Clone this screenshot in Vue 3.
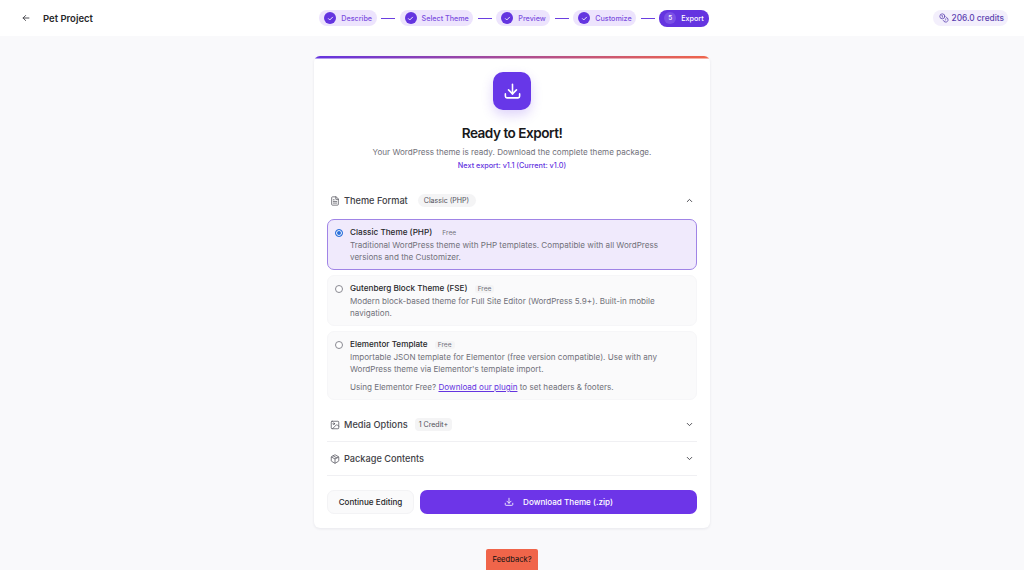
<template>
  <div class="page">
    <header class="topbar">
      <div class="topbar-left">
        <button class="back" aria-label="Back">
          <svg viewBox="0 0 24 24" width="10" height="10" fill="none" stroke="currentColor" stroke-width="2.2" stroke-linecap="round" stroke-linejoin="round">
            <path d="M19 12H5M11 6l-6 6 6 6" />
          </svg>
        </button>
        <span class="project">Pet Project</span>
      </div>

      <nav class="steps">
        <template v-for="(step, i) in steps" :key="step">
          <span v-if="i > 0" class="step-line"></span>
          <span class="step" :class="{ current: i === steps.length - 1 }">
            <span class="step-dot">
              <svg v-if="i < steps.length - 1" viewBox="0 0 24 24" width="7" height="7" fill="none" stroke="currentColor" stroke-width="3" stroke-linecap="round" stroke-linejoin="round">
                <path d="M5 12.5l4.5 4.5L19 7.5" />
              </svg>
              <template v-else>{{ i + 1 }}</template>
            </span>
            {{ step }}
          </span>
        </template>
      </nav>

      <div class="topbar-right">
        <span class="credits">
          <svg viewBox="0 0 24 24" width="10" height="10" fill="none" stroke="currentColor" stroke-width="1.9" stroke-linecap="round" stroke-linejoin="round">
            <circle cx="8" cy="8" r="6" />
            <path d="M18.1 10.4A6 6 0 1 1 10.3 18.1" />
            <path d="M7 6h1v4" />
            <path d="M16.7 13.9l.7.7-2.8 2.8" />
          </svg>
          206.0 credits
        </span>
      </div>
    </header>

    <main class="content">
      <section class="card">
        <div class="hero">
          <div class="hero-icon">
            <svg viewBox="0 0 24 24" width="19" height="19" fill="none" stroke="currentColor" stroke-width="2" stroke-linecap="round" stroke-linejoin="round">
              <path d="M21 15v3a2 2 0 0 1-2 2H5a2 2 0 0 1-2-2v-3" />
              <path d="M7 10l5 5 5-5" />
              <path d="M12 15V3" />
            </svg>
          </div>
          <h1>Ready to Export!</h1>
          <p class="lead">Your WordPress theme is ready. Download the complete theme package.</p>
          <p class="version">Next export: v1.1 (Current: v1.0)</p>
        </div>

        <div class="section open">
          <div class="section-head">
            <svg class="section-icon" viewBox="0 0 24 24" fill="none" stroke="currentColor" stroke-width="1.8" stroke-linecap="round" stroke-linejoin="round">
              <path d="M14 2H6a2 2 0 0 0-2 2v16a2 2 0 0 0 2 2h12a2 2 0 0 0 2-2V8z" />
              <path d="M14 2v6h6M16 13H8M16 17H8M10 9H8" />
            </svg>
            <span class="section-title">Theme Format</span>
            <span class="chip">Classic (PHP)</span>
            <svg class="chevron" viewBox="0 0 24 24" fill="none" stroke="currentColor" stroke-width="2.4" stroke-linecap="round" stroke-linejoin="round">
              <path d="M6 15l6-6 6 6" />
            </svg>
          </div>

          <div class="options">
            <div v-for="opt in options" :key="opt.name" class="option" :class="{ selected: opt.selected }">
              <span class="radio"></span>
              <div class="option-body">
                <div class="option-name">{{ opt.name }} <span class="free">Free</span></div>
                <p>{{ opt.text }}</p>
                <p v-if="opt.plugin" class="plugin">Using Elementor Free? <a href="#">Download our plugin</a> to set headers &amp; footers.</p>
              </div>
            </div>
          </div>
        </div>

        <div class="section">
          <div class="section-head">
            <svg class="section-icon" viewBox="0 0 24 24" fill="none" stroke="currentColor" stroke-width="1.8" stroke-linecap="round" stroke-linejoin="round">
              <rect x="3" y="3" width="18" height="18" rx="2" />
              <circle cx="9" cy="9" r="2" />
              <path d="M21 15l-3.1-3.1a2 2 0 0 0-2.8 0L6 21" />
            </svg>
            <span class="section-title">Media Options</span>
            <span class="chip small">1 Credit+</span>
            <svg class="chevron" viewBox="0 0 24 24" fill="none" stroke="currentColor" stroke-width="2.4" stroke-linecap="round" stroke-linejoin="round">
              <path d="M6 9l6 6 6-6" />
            </svg>
          </div>
        </div>

        <div class="section">
          <div class="section-head">
            <svg class="section-icon" viewBox="0 0 24 24" fill="none" stroke="currentColor" stroke-width="1.8" stroke-linecap="round" stroke-linejoin="round">
              <path d="M21 8a2 2 0 0 0-1-1.73l-7-4a2 2 0 0 0-2 0l-7 4A2 2 0 0 0 3 8v8a2 2 0 0 0 1 1.73l7 4a2 2 0 0 0 2 0l7-4A2 2 0 0 0 21 16z" />
              <path d="M3.3 7L12 12l8.7-5M12 22V12M7.5 4.3l9 5.2" />
            </svg>
            <span class="section-title">Package Contents</span>
            <svg class="chevron" viewBox="0 0 24 24" fill="none" stroke="currentColor" stroke-width="2.4" stroke-linecap="round" stroke-linejoin="round">
              <path d="M6 9l6 6 6-6" />
            </svg>
          </div>
        </div>

        <div class="actions">
          <button class="btn-secondary">Continue Editing</button>
          <button class="btn-primary">
            <svg viewBox="0 0 24 24" width="10" height="10" fill="none" stroke="currentColor" stroke-width="2" stroke-linecap="round" stroke-linejoin="round">
              <path d="M21 15v3a2 2 0 0 1-2 2H5a2 2 0 0 1-2-2v-3" />
              <path d="M7 10l5 5 5-5" />
              <path d="M12 15V3" />
            </svg>
            Download Theme (.zip)
          </button>
        </div>
      </section>
    </main>

    <button class="feedback">Feedback?</button>
  </div>
</template>

<script setup>
const steps = ['Describe', 'Select Theme', 'Preview', 'Customize', 'Export']

const options = [
  {
    name: 'Classic Theme (PHP)',
    text: 'Traditional WordPress theme with PHP templates. Compatible with all WordPress versions and the Customizer.',
    selected: true
  },
  {
    name: 'Gutenberg Block Theme (FSE)',
    text: 'Modern block-based theme for Full Site Editor (WordPress 5.9+). Built-in mobile navigation.'
  },
  {
    name: 'Elementor Template',
    text: "Importable JSON template for Elementor (free version compatible). Use with any WordPress theme via Elementor's template import.",
    plugin: true
  }
]
</script>

<style scoped>
.page {
  position: relative;
  height: 570px;
  overflow: hidden;
  background: #f9f9fb;
  font-family: Inter, "Liberation Sans", sans-serif;
  color: #27272a;
}

.topbar {
  display: grid;
  grid-template-columns: 1fr auto 1fr;
  align-items: center;
  height: 36px;
  padding: 0 16px 0 20px;
  background: #fff;
}

.topbar-left {
  display: flex;
  align-items: center;
  gap: 12px;
}

.back {
  display: flex;
  margin-left: 1px;
  padding: 0;
  border: none;
  background: none;
  color: #3f3f46;
}

.project {
  font-size: 9.5px;
  font-weight: 600;
  color: #27272a;
}

.steps {
  display: flex;
  align-items: center;
}

.step {
  display: flex;
  align-items: center;
  gap: 5px;
  height: 16px;
  padding: 0 4.5px 0 5px;
  border-radius: 8px;
  background: #ede4fd;
  color: #7c4fe0;
  font-size: 7.2px;
  font-weight: 500;
  white-space: nowrap;
}

.step-dot {
  display: flex;
  align-items: center;
  justify-content: center;
  width: 12px;
  height: 12px;
  border-radius: 50%;
  background: #6434e0;
  color: #fff;
  font-size: 6.4px;
}

.step.current {
  height: 17px;
  padding: 0 5px;
  background: #6434e0;
  color: #fff;
}

.step.current .step-dot {
  background: #7a50e6;
}

.step-line {
  width: 14px;
  height: 1px;
  margin: 0 4.5px;
  background: #6a3fe0;
}

.topbar-right {
  display: flex;
  justify-content: flex-end;
}

.credits {
  display: flex;
  align-items: center;
  gap: 3px;
  height: 16px;
  padding: 0 4px 0 6px;
  border-radius: 8px;
  background: #f3effc;
  color: #5b3fb0;
  font-size: 8.3px;
  font-weight: 500;
}

.content {
  display: flex;
  justify-content: center;
  padding-top: 20px;
}

.card {
  width: 396px;
  height: 472px;
  box-sizing: border-box;
  padding: 0 13px;
  border-radius: 6px;
  background:
    linear-gradient(90deg, #6434e0, #f0654a) top / 100% 2.5px no-repeat,
    #fff;
  box-shadow: 0 1px 3px rgba(24, 24, 60, 0.08);
}

.hero {
  display: flex;
  flex-direction: column;
  align-items: center;
  padding-top: 16px;
  text-align: center;
}

.hero-icon {
  display: flex;
  align-items: center;
  justify-content: center;
  width: 38px;
  height: 38px;
  border-radius: 10px;
  background: #6737e8;
  color: #fff;
  box-shadow: 0 5px 12px rgba(103, 55, 232, 0.22);
}

h1 {
  margin: 15px 0 0;
  font-size: 13.6px;
  line-height: 17px;
  font-weight: 600;
  letter-spacing: -0.5px;
  color: #18181b;
}

.lead {
  margin: 4px 0 0;
  font-size: 8.1px;
  line-height: 12px;
  color: #71717a;
}

.version {
  margin: 3px 0 0;
  font-size: 7.28px;
  line-height: 10px;
  font-weight: 500;
  color: #6434e0;
}

.section {
  border-bottom: 1px solid #f0f0f3;
}

.section.open {
  border-bottom: none;
  margin-top: 13px;
}

.section-head {
  display: flex;
  align-items: center;
  height: 33px;
  padding: 0 3px;
}

.section-icon {
  width: 10px;
  height: 10px;
  margin-right: 4px;
  color: #52525b;
}

.section-title {
  font-size: 9.2px;
  font-weight: 500;
  color: #3f3f46;
}

.chip {
  margin-left: 10px;
  padding: 0 7px 0 6px;
  height: 13px;
  line-height: 13px;
  border-radius: 7px;
  background: #f4f4f5;
  color: #52525b;
  font-size: 7.07px;
}

.chip.small {
  margin-left: 7px;
  padding: 0 4px;
  border-radius: 4px;
}

.chevron {
  width: 9px;
  height: 9px;
  margin-left: auto;
  color: #3f3f46;
}

.options {
  display: flex;
  flex-direction: column;
  gap: 5px;
  margin-top: 2px;
  padding-bottom: 8px;
}

.option {
  display: flex;
  gap: 7px;
  padding: 7px 8px 6px 7px;
  border: 1px solid #f6f6f8;
  border-radius: 7px;
  background: #fafafb;
}

.option.selected {
  border-color: #a084e6;
  background: #f0eafc;
}

.radio {
  flex: none;
  width: 8px;
  height: 8px;
  margin-top: 2px;
  box-sizing: border-box;
  border: 1px solid #8a8a92;
  border-radius: 50%;
  background: #fff;
}

.selected .radio {
  border: 1px solid #2a6fdb;
  background: #2a6fdb;
  box-shadow: inset 0 0 0 1px #fff;
}

.option-name {
  font-size: 8.16px;
  line-height: 11px;
  font-weight: 500;
  color: #27272a;
}

.free {
  margin-left: 5px;
  padding: 0 3px;
  border-radius: 3px;
  background: #f4f4f5;
  color: #71717a;
  font-size: 6.6px;
  font-weight: 400;
}

.selected .free {
  background: none;
}

.option p {
  margin: 0;
  font-size: 8.1px;
  line-height: 12px;
  color: #71717a;
}

.option p.plugin {
  margin-top: 6px;
}

.plugin a {
  color: #6434e0;
}

.actions {
  display: flex;
  gap: 6px;
  margin-top: 14px;
}

.actions button {
  height: 24px;
  border-radius: 7px;
  font-family: inherit;
  font-size: 8.1px;
  font-weight: 500;
}

.btn-secondary {
  width: 87px;
  padding: 0;
  border: 1px solid #f3f3f5;
  background: #fafafb;
  color: #27272a;
}

.btn-primary {
  display: flex;
  flex: 1;
  align-items: center;
  justify-content: center;
  gap: 9px;
  border: none;
  background: #6d35e8;
  color: #fff;
}

.feedback {
  position: absolute;
  left: 486px;
  bottom: 0;
  width: 52px;
  height: 21px;
  padding: 0;
  border: none;
  border-radius: 2px 2px 0 0;
  background: #f0654a;
  color: #111;
  font-family: Inter, "Liberation Sans", sans-serif;
  font-size: 7.6px;
}
</style>
